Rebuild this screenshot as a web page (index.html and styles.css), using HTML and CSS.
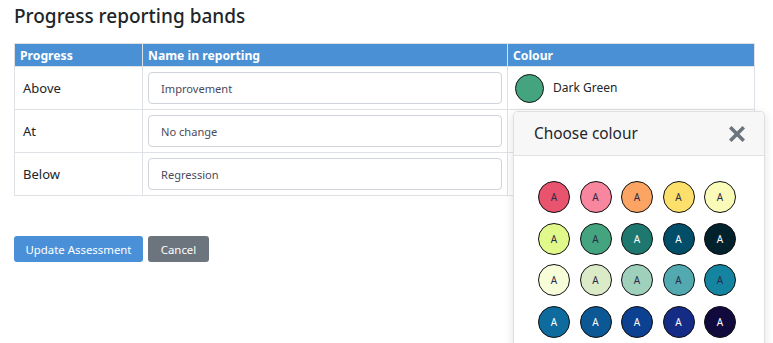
FILE: index.html
```html
<!DOCTYPE html>
<html><head><meta charset="utf-8"><link rel="stylesheet" href="styles.css"></head><body>
  <main class="page">
    <h1 class="title">Progress reporting bands</h1>
    <table class="bands">
      <thead>
        <tr><th class="col-progress">Progress</th><th class="col-name">Name in reporting</th><th class="col-colour">Colour</th></tr>
      </thead>
      <tbody>
        <tr>
          <td class="label">Above</td>
          <td class="field"><input class="text-input" type="text" value="Improvement"></td>
          <td class="colour-cell"><span class="chip" style="background:#43a47f"></span><span>Dark Green</span></td>
        </tr>
        <tr>
          <td class="label">At</td>
          <td class="field"><input class="text-input" type="text" value="No change"></td>
          <td class="colour-cell"></td>
        </tr>
        <tr>
          <td class="label">Below</td>
          <td class="field"><input class="text-input" type="text" value="Regression"></td>
          <td class="colour-cell"></td>
        </tr>
      </tbody>
    </table>
    <div class="actions">
      <button class="btn btn-primary">Update Assessment</button>
      <button class="btn btn-secondary">Cancel</button>
    </div>

    <div class="popover">
      <div class="popover-header">
        <span>Choose colour</span>
        <svg class="close" width="16" height="16" viewBox="0 0 16 16"><path d="M2.5 2.5 L13.5 13.5 M13.5 2.5 L2.5 13.5" stroke="#6c757d" stroke-width="3.6" stroke-linecap="square"/></svg>
      </div>
      <div class="swatches">
        <span class="swatch" style="background:#e8536e">A</span>
        <span class="swatch" style="background:#f8869f">A</span>
        <span class="swatch" style="background:#fca463">A</span>
        <span class="swatch" style="background:#fde06b">A</span>
        <span class="swatch" style="background:#fafbb9">A</span>
        <span class="swatch" style="background:#e0f98a">A</span>
        <span class="swatch" style="background:#43a47f">A</span>
        <span class="swatch dark" style="background:#1f7870">A</span>
        <span class="swatch dark" style="background:#024d68">A</span>
        <span class="swatch dark" style="background:#01212c">A</span>
        <span class="swatch" style="background:#f7fdd9">A</span>
        <span class="swatch" style="background:#dcebc7">A</span>
        <span class="swatch" style="background:#9fd0bb">A</span>
        <span class="swatch" style="background:#52a9b0">A</span>
        <span class="swatch" style="background:#1484a0">A</span>
        <span class="swatch dark" style="background:#0e6b9e">A</span>
        <span class="swatch dark" style="background:#0b5894">A</span>
        <span class="swatch dark" style="background:#0c4090">A</span>
        <span class="swatch dark" style="background:#152c86">A</span>
        <span class="swatch dark" style="background:#110b3d">A</span>
      </div>
    </div>
  </main>
</body></html>
```

FILE: styles.css
```css
html, body {
  height: 343px;
  overflow: hidden;
}
body {
  font-family: 'Noto Sans', 'Open Sans', sans-serif;
  color: #212529;
  background: #fff;
  margin: 0;
  padding: 0;
}
.page {
  position: relative;
  height: 343px;
  box-sizing: border-box;
  padding: 4px 18px 0 14px;
  overflow: hidden;
}
.title {
  font-size: 19px;
  font-weight: 500;
  margin: 0 0 15px 0;
  line-height: 24px;
}
.bands {
  border-collapse: collapse;
  width: 741px;
  font-size: 13px;
}
.bands th {
  background: #4a90d4;
  color: #fff;
  text-align: left;
  font-weight: 700;
  font-size: 12.2px;
  padding: 2px 5px 2px;
  height: 18px;
  border: 1px solid #dee2e6;
}
.col-progress { width: 117px; }
.col-name { width: 354px; }
.bands td {
  border: 1px solid #dee2e6;
  padding: 5px;
  height: 32px;
}
.bands td.label { padding-left: 8px; }
.text-input {
  box-sizing: border-box;
  width: 100%;
  height: 32px;
  border: 1px solid #ced4da;
  border-radius: 4px;
  padding: 0 12px;
  font: inherit;
  font-size: 11.1px;
  color: #4b4a5c;
  display: block;
}
.colour-cell { font-size: 12px; }
.colour-cell .chip {
  display: inline-block;
  width: 27px;
  height: 27px;
  border: 1px solid #111;
  border-radius: 50%;
  vertical-align: middle;
  margin: 0 9px 0 2px;
}
.actions {
  margin-top: 40px;
  display: flex;
  gap: 5px;
}
.btn {
  font: inherit;
  font-size: 11.4px;
  color: #fff;
  border: none;
  border-radius: 3px;
  height: 26px;
  padding: 0;
  white-space: nowrap;
  text-align: center;
}
.btn-primary { background: #4a90d9; width: 129px; }
.btn-secondary { background: #6c757d; width: 61px; }
.popover {
  position: absolute;
  left: 513px;
  top: 111px;
  width: 250px;
  height: 240px;
  background: #fff;
  border: 1px solid rgba(0,0,0,0.12);
  border-radius: 5px;
  box-shadow: 0 2px 10px rgba(0,0,0,0.12);
}
.popover-header {
  background: #f7f7f7;
  border-bottom: 1px solid #e2e2e2;
  border-radius: 5px 5px 0 0;
  height: 43px;
  display: flex;
  align-items: center;
  justify-content: space-between;
  padding: 0 19px 0 20px;
  font-size: 15.4px;
}
.swatches {
  display: grid;
  grid-template-columns: repeat(5, 32px);
  gap: 9.5px;
  padding: 25px 0 0 24px;
}
.swatch {
  box-sizing: border-box;
  width: 32px;
  height: 32px;
  border: 1px solid #111;
  border-radius: 50%;
  display: flex;
  align-items: center;
  justify-content: center;
  font-size: 10px;
  color: #2b2b4a;
}
.swatch.dark { color: #fff; }
```
